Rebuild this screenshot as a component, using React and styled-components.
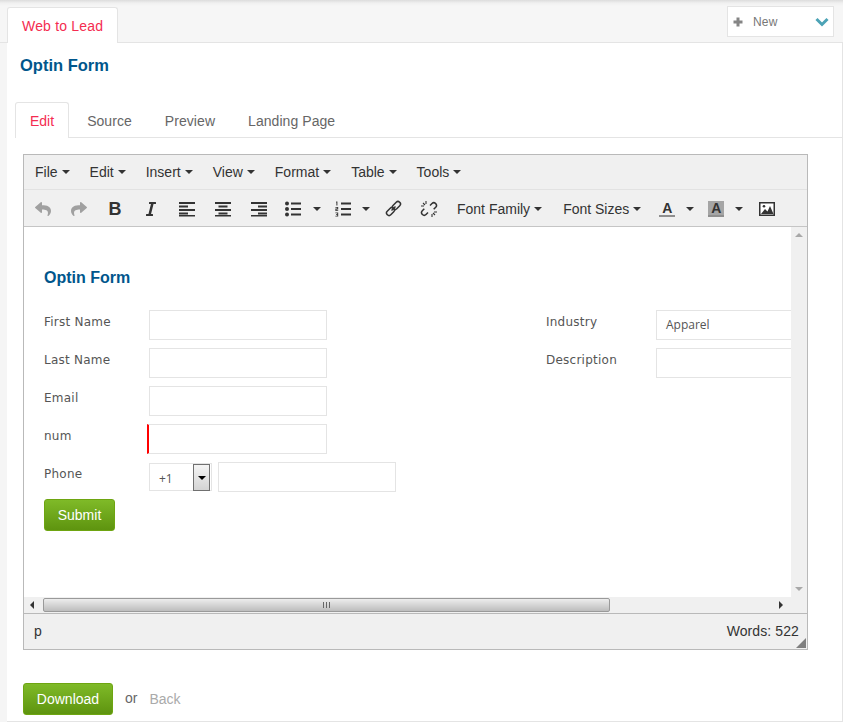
import React from 'react'
import styled, { createGlobalStyle } from 'styled-components'
import { FaReply, FaShare, FaItalic } from 'react-icons/fa'

const GlobalStyle = createGlobalStyle`
  html, body {
    margin: 0;
    padding: 0;
    overflow: hidden;
  }
  body {
    font-family: "Liberation Sans", Arial, sans-serif;
    font-size: 14px;
    color: #333;
  }
`

const Page = styled.div`
  width: 843px;
  height: 722px;
  display: flex;
  flex-direction: column;
  background: #f5f5f5;
  overflow: hidden;
`

const TopBar = styled.div`
  height: 43px;
  flex-shrink: 0;
  box-sizing: border-box;
  padding: 7px 9px 0 7px;
  display: flex;
  justify-content: space-between;
  align-items: flex-start;
  border-bottom: 1px solid #e4e4e4;
  background: linear-gradient(#dcdcdc 0, #f0f0f0 3px, #f6f6f6 6px);
`

const MainTab = styled.div`
  height: 36px;
  box-sizing: border-box;
  padding: 9px 14px 0;
  background: #fff;
  border: 1px solid #e4e4e4;
  border-bottom: none;
  border-radius: 3px 3px 0 0;
  color: #f42c50;
  line-height: 18px;
  letter-spacing: 0.18px;
`

const NewButton = styled.div`
  width: 107px;
  height: 31px;
  margin-top: -1px;
  box-sizing: border-box;
  padding: 0 4px 0 5px;
  display: flex;
  align-items: center;
  background: #fff;
  border: 1px solid #e4e4e4;
  font-size: 12px;
  letter-spacing: 0.15px;
  color: #777;
  svg:first-child {
    margin-right: 10px;
  }
  svg:last-child {
    margin-left: auto;
  }
`

const Main = styled.div`
  flex: 1;
  min-height: 0;
  margin-left: 7px;
  background: #fff;
  border-right: 1px solid #e4e4e4;
  border-bottom: 1px solid #e4e4e4;
  display: flex;
  flex-direction: column;
`

const Title = styled.h1`
  margin: 12px 0 0 13px;
  font-size: 16.5px;
  line-height: 20px;
  font-weight: bold;
  color: #00568c;
`

const TabRow = styled.div`
  margin: 27px 0 0 8px;
  height: 36px;
  box-sizing: border-box;
  display: flex;
  border-bottom: 1px solid #e4e4e4;
`

const Tab = styled.div`
  height: 36px;
  box-sizing: border-box;
  margin-right: 3px;
  padding: 9px 14px 0;
  line-height: 18px;
  letter-spacing: ${p => (p.$active ? 0 : 0.06)}px;
  border: 1px solid ${p => (p.$active ? '#e4e4e4' : 'transparent')};
  border-bottom: none;
  border-radius: 3px 3px 0 0;
  background: ${p => (p.$active ? '#fff' : 'transparent')};
  color: ${p => (p.$active ? '#f42c50' : '#666')};
`

const Editor = styled.div`
  width: 785px;
  height: 496px;
  flex-shrink: 0;
  margin: 16px 0 0 16px;
  box-sizing: border-box;
  border: 1px solid #b9b9b9;
  display: flex;
  flex-direction: column;
  background: #f0f0f0;
`

const MenuBar = styled.div`
  height: 35px;
  flex-shrink: 0;
  box-sizing: border-box;
  padding-left: 11px;
  display: flex;
  align-items: center;
  gap: 20px;
  border-bottom: 1px solid #e2e2e2;
`

const MenuItem = styled.span`
  display: flex;
  align-items: center;
  line-height: 18px;
  color: #333;
`

const Caret = styled.i`
  display: inline-block;
  margin-left: ${p => p.$gap ?? 4}px;
  border-top: 4px solid #333;
  border-left: 4px solid transparent;
  border-right: 4px solid transparent;
`

const ToolBar = styled.div`
  height: 37px;
  flex-shrink: 0;
  box-sizing: border-box;
  padding: 1px 0 0 1px;
  display: flex;
  align-items: center;
  border-bottom: 1px solid #c5c5c5;
`

const Tool = styled.div`
  width: ${p => p.$w ?? 36}px;
  margin-left: ${p => p.$ml ?? 0}px;
  margin-right: ${p => p.$mr ?? 0}px;
  height: 34px;
  flex-shrink: 0;
  display: flex;
  align-items: center;
  justify-content: center;
  color: ${p => (p.$muted ? '#a0a0a0' : '#333')};
  font-size: 16px;
`

const BoldGlyph = styled.span`
  font-family: "Liberation Sans", Arial, sans-serif;
  font-weight: bold;
  font-size: 18px;
  line-height: 16px;
  color: #333;
`

const FontMenu = styled(MenuItem)`
  margin-left: ${p => p.$ml}px;
`

const ColorA = styled.span`
  width: 16px;
  height: 16px;
  box-sizing: border-box;
  display: block;
  text-align: center;
  font-weight: bold;
  font-size: 14px;
  line-height: 15px;
  color: #333;
  background: ${p => (p.$filled ? '#a5a5a5' : 'transparent')};
  border-bottom: 2px solid #8f8f8f;
`

const Viewport = styled.div`
  flex: 1;
  min-height: 0;
  display: flex;
  background: #fff;
`

const Canvas = styled.div`
  flex: 1;
  min-width: 0;
  overflow: hidden;
  padding: 42px 0 0 20px;
  font-family: "DejaVu Sans", Verdana, sans-serif;
  font-size: 12px;
  color: #555;
`

const CanvasTitle = styled.h2`
  margin: 0 0 23px;
  font-family: "Liberation Sans", Arial, sans-serif;
  font-size: 16px;
  line-height: 18px;
  font-weight: bold;
  color: #00568c;
`

const Columns = styled.div`
  display: flex;
  align-items: flex-start;
`

const FormColumn = styled.div`
  width: ${p => p.$width}px;
  flex-shrink: 0;
  display: flex;
  flex-direction: column;
  gap: 8px;
`

const FieldRow = styled.div`
  height: 30px;
  display: flex;
  align-items: flex-start;
`

const Label = styled.label`
  width: ${p => p.$width}px;
  flex-shrink: 0;
  line-height: 24px;
  letter-spacing: 0.24px;
`

const Field = styled.div`
  width: ${p => (p.$required ? 180 : 178)}px;
  height: 30px;
  box-sizing: border-box;
  margin-left: ${p => (p.$required ? -2 : 0)}px;
  padding-left: 9px;
  flex-shrink: 0;
  border: 1px solid #e4e4e4;
  border-left: ${p => (p.$required ? '2px solid #f00' : '1px solid #e4e4e4')};
  font-family: "Open Sans", sans-serif;
  font-size: 12px;
  line-height: 28px;
  background: #fff;
`

const CodeSelect = styled.div`
  width: 63px;
  height: 28px;
  margin: 1px 6px 0 0;
  box-sizing: border-box;
  padding: 1px 1px 1px 9px;
  display: flex;
  justify-content: space-between;
  flex-shrink: 0;
  border: 1px solid #e4e4e4;
  font-family: "Open Sans", sans-serif;
  font-size: 12px;
  line-height: 28px;
`

const SelectArrow = styled.span`
  width: 17px;
  height: 27px;
  margin-top: -1px;
  box-sizing: border-box;
  display: flex;
  align-items: center;
  justify-content: center;
  border: 1px solid #707070;
  background: linear-gradient(#f4f4f4, #d4d4d4);
  i {
    border-top: 4px solid #000;
    border-left: 4px solid transparent;
    border-right: 4px solid transparent;
  }
`

const GreenButton = styled.div`
  box-sizing: border-box;
  width: ${p => p.$width}px;
  height: 32px;
  display: flex;
  align-items: center;
  justify-content: center;
  border: 1px solid #6ea511;
  border-radius: 3px;
  background: linear-gradient(#7fba28, #5e940f);
  font-family: "Liberation Sans", Arial, sans-serif;
  font-size: 14px;
  color: #fff;
`

const SubmitRow = styled.div`
  margin-top: -1px;
`

const VScroll = styled.div`
  width: 16px;
  flex-shrink: 0;
  display: flex;
  flex-direction: column;
  justify-content: space-between;
  align-items: center;
  padding: 6px 0;
  box-sizing: border-box;
  background: #f0f0f0;
`

const Arrow = styled.i`
  display: block;
  ${p => p.$dir === 'up' && 'border-bottom: 4px solid #a8a8a8; border-left: 4px solid transparent; border-right: 4px solid transparent;'}
  ${p => p.$dir === 'down' && 'border-top: 4px solid #a8a8a8; border-left: 4px solid transparent; border-right: 4px solid transparent;'}
  ${p => p.$dir === 'left' && 'border-right: 4px solid #333; border-top: 4px solid transparent; border-bottom: 4px solid transparent;'}
  ${p => p.$dir === 'right' && 'border-left: 4px solid #333; border-top: 4px solid transparent; border-bottom: 4px solid transparent;'}
`

const HScroll = styled.div`
  height: 16px;
  flex-shrink: 0;
  display: flex;
  align-items: center;
  box-sizing: border-box;
  padding: 0 24px 0 6px;
  background: #f0f0f0;
`

const Thumb = styled.div`
  width: 567px;
  height: 14px;
  margin-left: 9px;
  box-sizing: border-box;
  display: flex;
  align-items: center;
  justify-content: center;
  border: 1px solid #9a9a9a;
  border-radius: 2px;
  background: linear-gradient(#ededed, #bdbdbd);
  span {
    width: 7px;
    height: 6px;
    background: repeating-linear-gradient(90deg, #666 0 1px, transparent 1px 3px);
  }
`

const ThumbEnd = styled.div`
  margin-left: auto;
`

const StatusBar = styled.div`
  height: 36px;
  flex-shrink: 0;
  box-sizing: border-box;
  position: relative;
  padding: 0 8px 2px 10px;
  display: flex;
  align-items: center;
  justify-content: space-between;
  border-top: 1px solid #b9b9b9;
  color: #333;
`

const WordCount = styled.span`
  letter-spacing: 0.1px;
`

const ResizeGrip = styled.div`
  position: absolute;
  right: 1px;
  bottom: 1px;
  width: 10px;
  height: 10px;
  background: radial-gradient(circle at 1px 1px, #777 0.7px, transparent 0.8px) 0 0 / 2px 2px;
  clip-path: polygon(100% 0, 100% 100%, 0 100%);
`

const Footer = styled.div`
  margin: 33px 0 0 16px;
  display: flex;
  align-items: center;
  font-size: 14px;
`

const Or = styled.span`
  margin: -3px 0 0 12px;
  color: #666;
`

const BackLink = styled.a`
  margin-left: 12px;
  color: #aaa;
`

const PlusIcon = () => (
  <svg width="10" height="10" viewBox="0 0 10 10" fill="#858585">
    <path d="M3.5 0.5h3v3h3v3h-3v3h-3v-3h-3v-3h3z" />
  </svg>
)

const ChevronIcon = () => (
  <svg width="14" height="10" viewBox="0 0 14 10" fill="none" stroke="#4ca3b6" strokeWidth="3">
    <path d="M1.5 2L7 7.5 12.5 2" />
  </svg>
)

const LinkIcon = () => (
  <svg width="17" height="17" viewBox="0 0 17 17" fill="none" stroke="#333" strokeWidth="1.5">
    <rect x="9" y="1" width="5" height="9" rx="2.4" transform="rotate(45 11.5 5.5)" />
    <rect x="3" y="7" width="5" height="9" rx="2.4" transform="rotate(45 5.5 11.5)" />
    <path d="M6.5 10.5l4-4" />
  </svg>
)

const UnlinkIcon = () => (
  <svg width="18" height="18" viewBox="0 0 18 18" fill="none" stroke="#333" strokeWidth="1.5">
    <path d="M10 5.5l2-2a2.6 2.6 0 0 1 3.6 0l.1.1a2.6 2.6 0 0 1 0 3.6l-2 2" />
    <path d="M8 12.5l-2 2a2.6 2.6 0 0 1-3.6 0l-.1-.1a2.6 2.6 0 0 1 0-3.6l2-2" />
    <path strokeWidth="1.1" d="M6 1v3M1 6h3M3 3l2 2M12 17v-3M17 12h-3M15 15l-2-2" />
  </svg>
)

const AlignIcon = ({ kind }) => {
  const x = { left: 0, center: 3.5, right: 7 }[kind]
  return (
    <svg width="16" height="16" viewBox="0 0 16 16" fill="#333">
      <rect x="0" y="1" width="16" height="2" />
      <rect x={x} y="4.5" width="9" height="2" />
      <rect x="0" y="8" width="16" height="2" />
      <rect x={x} y="11.5" width="9" height="2" />
      <rect x="0" y="14" width="16" height="1.5" />
    </svg>
  )
}

const BulletIcon = () => (
  <svg width="16" height="16" viewBox="0 0 16 16" fill="#333">
    <circle cx="2" cy="2.5" r="2" />
    <circle cx="2" cy="8" r="2" />
    <circle cx="2" cy="13.5" r="2" />
    <rect x="6" y="1.5" width="10" height="2" />
    <rect x="6" y="7" width="10" height="2" />
    <rect x="6" y="12.5" width="10" height="2" />
  </svg>
)

const NumberIcon = () => (
  <svg width="16" height="16" viewBox="0 0 16 16" fill="#333">
    <path d="M1.2 0.5h1.2v4H1.4v-3h-.4z" />
    <path d="M.4 6h2.8v2.4H1.4v.8h1.8V10H.4V7.6h1.8v-.8H.4z" />
    <path d="M.4 11.4h2.8v4.2H.4v-.8h1.8v-.9H1v-.7h1.2v-1H.4z" />
    <rect x="6" y="1.5" width="10" height="2" />
    <rect x="6" y="7" width="10" height="2" />
    <rect x="6" y="12.5" width="10" height="2" />
  </svg>
)

const ImageIcon = () => (
  <svg width="16" height="14" viewBox="0 0 16 14">
    <path fill="#333" d="M0 0h16v14H0z" />
    <path fill="#fff" d="M1.5 1.5h13v11h-13z" />
    <path fill="#333" d="M2 12l4-5 2.5 2.5L11 4l3.5 8z" />
    <circle cx="5" cy="4.2" r="1.3" fill="#333" />
  </svg>
)

const menus = ['File', 'Edit', 'Insert', 'View', 'Format', 'Table', 'Tools']

const leftFields = [
  { label: 'First Name' },
  { label: 'Last Name' },
  { label: 'Email' },
  { label: 'num', required: true }
]

export default function App() {
  return (
    <Page>
      <GlobalStyle />
      <TopBar>
        <MainTab>Web to Lead</MainTab>
        <NewButton>
          <PlusIcon />
          New
          <ChevronIcon />
        </NewButton>
      </TopBar>
      <Main>
        <Title>Optin Form</Title>
        <TabRow>
          <Tab $active>Edit</Tab>
          <Tab>Source</Tab>
          <Tab>Preview</Tab>
          <Tab>Landing Page</Tab>
        </TabRow>
        <Editor>
          <MenuBar>
            {menus.map(m => (
              <MenuItem key={m}>{m}<Caret /></MenuItem>
            ))}
          </MenuBar>
          <ToolBar>
            <Tool $muted><FaReply /></Tool>
            <Tool $muted><FaShare /></Tool>
            <Tool><BoldGlyph>B</BoldGlyph></Tool>
            <Tool><FaItalic /></Tool>
            <Tool><AlignIcon kind="left" /></Tool>
            <Tool><AlignIcon kind="center" /></Tool>
            <Tool><AlignIcon kind="right" /></Tool>
            <Tool $w={32}><BulletIcon /></Tool>
            <Tool $w={16} $mr={2}><Caret $gap={0} /></Tool>
            <Tool $w={32}><NumberIcon /></Tool>
            <Tool $w={14} $mr={2}><Caret $gap={0} /></Tool>
            <Tool><LinkIcon /></Tool>
            <Tool><UnlinkIcon /></Tool>
            <FontMenu $ml={10}>Font Family<Caret /></FontMenu>
            <FontMenu $ml={21}>Font Sizes<Caret /></FontMenu>
            <Tool $ml={8}><ColorA>A</ColorA></Tool>
            <Tool $w={10} $mr={3}><Caret $gap={0} /></Tool>
            <Tool><ColorA $filled>A</ColorA></Tool>
            <Tool $w={10} $mr={5}><Caret $gap={0} /></Tool>
            <Tool><ImageIcon /></Tool>
          </ToolBar>
          <Viewport>
            <Canvas>
              <CanvasTitle>Optin Form</CanvasTitle>
              <Columns>
                <FormColumn $width={502}>
                  {leftFields.map(f => (
                    <FieldRow key={f.label}>
                      <Label $width={105}>{f.label}</Label>
                      <Field $required={f.required} />
                    </FieldRow>
                  ))}
                  <FieldRow>
                    <Label $width={105}>Phone</Label>
                    <CodeSelect>
                      +1
                      <SelectArrow><i /></SelectArrow>
                    </CodeSelect>
                    <Field />
                  </FieldRow>
                  <SubmitRow>
                    <GreenButton $width={71}>Submit</GreenButton>
                  </SubmitRow>
                </FormColumn>
                <FormColumn $width={288}>
                  <FieldRow>
                    <Label $width={110}>Industry</Label>
                    <Field>Apparel</Field>
                  </FieldRow>
                  <FieldRow>
                    <Label $width={110}>Description</Label>
                    <Field />
                  </FieldRow>
                </FormColumn>
              </Columns>
            </Canvas>
            <VScroll>
              <Arrow $dir="up" />
              <Arrow $dir="down" />
            </VScroll>
          </Viewport>
          <HScroll>
            <Arrow $dir="left" />
            <Thumb><span /></Thumb>
            <ThumbEnd><Arrow $dir="right" /></ThumbEnd>
          </HScroll>
          <StatusBar>
            <span>p</span>
            <WordCount>Words: 522</WordCount>
            <ResizeGrip />
          </StatusBar>
        </Editor>
        <Footer>
          <GreenButton $width={90}>Download</GreenButton>
          <Or>or</Or>
          <BackLink>Back</BackLink>
        </Footer>
      </Main>
    </Page>
  )
}
